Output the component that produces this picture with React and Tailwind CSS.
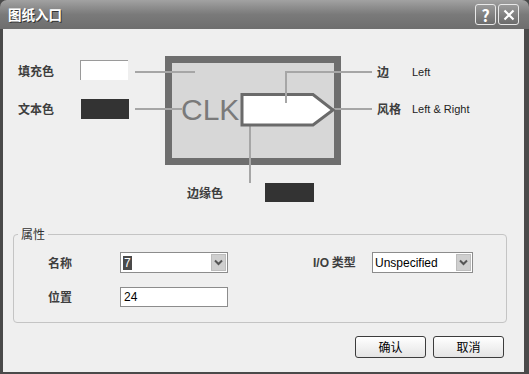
import React from "react";

const cjk = { fontFamily: '"Noto Sans CJK SC", "Noto Sans", sans-serif' };
const latin = { fontFamily: '"Liberation Sans", Arial, sans-serif' };

function Combo({ width, children }) {
  return (
    <div
      className={`h-[21px] ${width} bg-white border border-[#8c8c8c] flex items-center pl-[2px] pr-[1px]`}
    >
      <div className="flex-1 flex items-center text-[12px] text-black" style={latin}>
        {children}
      </div>
      <div className="w-[15px] h-[17px] bg-[#cfcfcf] border border-[#bdbdbd] flex items-center justify-center">
        <svg width="9" height="7" viewBox="0 0 9 7">
          <path d="M1 1.5 L4.5 5 L8 1.5" stroke="#555" strokeWidth="2" fill="none" />
        </svg>
      </div>
    </div>
  );
}

function Btn({ children }) {
  return (
    <button
      className="w-[71px] h-[22px] rounded-[3px] border border-[#3c3c3c] bg-gradient-to-b from-white to-[#e4e4e4] text-[12px] text-black flex items-center justify-center"
      style={cjk}
    >
      {children}
    </button>
  );
}

function TitleBtn({ children }) {
  return (
    <div className="w-[21px] h-[21px] rounded-[3px] border border-[#e8e8e8] bg-gradient-to-b from-[#9a9a9a] to-[#6c6c6c] flex items-center justify-center text-white font-bold text-[16px]">
      {children}
    </div>
  );
}

function Diagram() {
  const lbl = "absolute text-[12px] font-bold text-[#3e3e3e] leading-none -translate-y-1/2";
  return (
    <div className="relative h-[205px]">
      <svg className="absolute left-0 top-0" width="521" height="205">
        <rect x="165.5" y="30.5" width="169" height="102" fill="#d7d7d7" stroke="#6e6e6e" strokeWidth="7" />
        <g stroke="#a6a6a6" strokeWidth="2" fill="none">
          <line x1="132" y1="43" x2="192" y2="43" />
          <line x1="132" y1="80" x2="179" y2="80" />
          <line x1="315" y1="80" x2="369" y2="80" />
          <line x1="247" y1="96" x2="247" y2="154" />
        </g>
        <polygon
          points="239,65.5 310,65.5 330,81 310,96 239,96"
          fill="#fff"
          stroke="#6a6a6a"
          strokeWidth="3"
        />
        <g stroke="#a6a6a6" strokeWidth="2" fill="none">
          <polyline points="283,74 283,43 369,43" />
        </g>
        <text x="178" y="91" fontSize="30" fill="#7a7a7a" style={latin}>
          CLK
        </text>
      </svg>

      <span className={lbl} style={{ ...cjk, left: 15, top: 42 }}>填充色</span>
      <div className="absolute left-[77px] top-[31px] w-[48px] h-[20px] bg-white border-t border-l border-[#9a9a9a]" />
      <span className={lbl} style={{ ...cjk, left: 15, top: 80 }}>文本色</span>
      <div className="absolute left-[78px] top-[70px] w-[48px] h-[20px] bg-[#333]" />

      <span className={lbl} style={{ ...cjk, left: 374, top: 43 }}>边</span>
      <span className="absolute left-[409px] top-[43px] -translate-y-1/2 text-[11px] leading-none text-[#222]" style={latin}>Left</span>
      <span className={lbl} style={{ ...cjk, left: 374, top: 80 }}>风格</span>
      <span className="absolute left-[409px] top-[80px] -translate-y-1/2 text-[11px] leading-none text-[#222]" style={latin}>Left &amp; Right</span>

      <span className={lbl} style={{ ...cjk, left: 184, top: 164 }}>边缘色</span>
      <div className="absolute left-[262px] top-[154px] w-[49px] h-[19px] bg-[#333]" />
    </div>
  );
}

export default function App() {
  const label = "text-[12px] font-bold text-[#3e3e3e]";
  return (
    <div className="w-[529px] h-[374px] flex flex-col bg-[#4a4a4a]" style={cjk}>
      <div className="h-[29px] shrink-0 rounded-t-[7px] bg-gradient-to-b from-[#a2a2a2] via-[#7a7a7a] to-[#6e6e6e] flex items-center pl-[8px] pr-[10px]">
        <span className="flex-1 text-white font-bold text-[13.5px] [text-shadow:1px_1px_0_#333]">图纸入口</span>
        <div className="flex gap-[2px]">
          <TitleBtn>?</TitleBtn>
          <TitleBtn>
            <svg width="12" height="12" viewBox="0 0 12 12">
              <path d="M1.5 1.5 L10.5 10.5 M10.5 1.5 L1.5 10.5" stroke="#fff" strokeWidth="2.2" />
            </svg>
          </TitleBtn>
        </div>
      </div>

      <div className="flex-1 ml-[3px] mr-[5px] mb-[2px] bg-[#efefef] flex flex-col">
        <Diagram />

        <div className="relative mx-[10px] w-[494px] h-[89px] border border-[#c4c4c4] rounded-[4px] pt-[17px] pl-[34px]">
          <span className="absolute left-[4px] -top-[8px] px-[3px] bg-[#efefef] text-[12px] leading-[14px] text-[#333]">属性</span>
          <div className="flex items-center h-[21px]">
            <span className={`w-[72px] ${label}`}>名称</span>
            <Combo width="w-[108px]">
              <span className="bg-[#4a4a4a] text-white px-[1px] leading-[14px]">7</span>
            </Combo>
            <span className={`ml-[85px] w-[59px] ${label}`}>
              <span style={latin}>I/O</span> 类型
            </span>
            <Combo width="w-[101px]">Unspecified</Combo>
          </div>
          <div className="flex items-center h-[20px] mt-[14px]">
            <span className={`w-[72px] ${label}`}>位置</span>
            <div className="w-[108px] h-[20px] bg-white border border-[#8c8c8c] flex items-center pl-[3px] text-[12px] text-black" style={latin}>
              24
            </div>
          </div>
        </div>

        <div className="flex justify-end gap-[7px] mt-[13px] pr-[20px]">
          <Btn>确认</Btn>
          <Btn>取消</Btn>
        </div>
      </div>
    </div>
  );
}
